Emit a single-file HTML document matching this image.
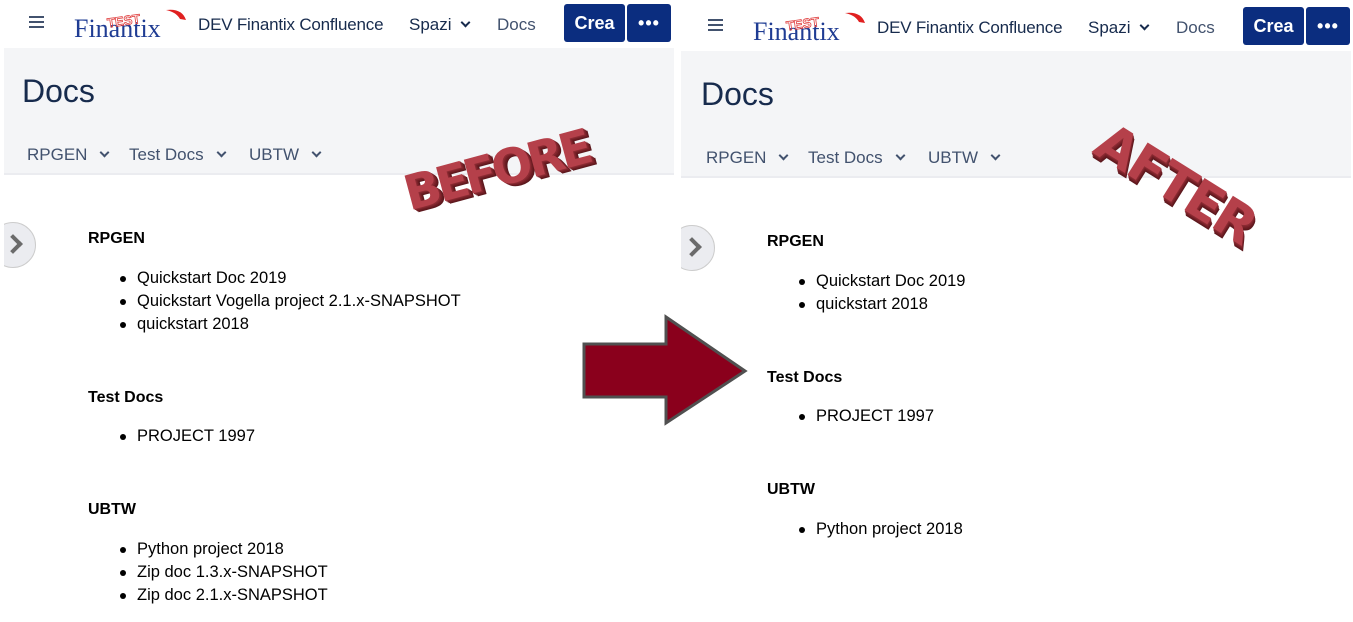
<!DOCTYPE html>
<html><head><meta charset="utf-8"><style>
*{margin:0;padding:0;box-sizing:border-box}
body{width:1353px;height:619px;background:#fff;position:relative;overflow:hidden;font-family:"Liberation Sans",sans-serif}
.p{position:absolute;top:0;width:676px;height:619px}
.a{position:absolute;white-space:nowrap}
.clip{position:absolute;left:4px;top:0;width:672px;height:619px;overflow:hidden}
.gray{position:absolute;left:4px;top:48px;width:670px;height:127px;background:#f4f5f7;border-bottom:2px solid #ebecf0}
.nav{font-size:17px;color:#172b4d;top:15px}
.sub{font-size:17px;color:#42526e;top:145px}
.h{font-size:16px;font-weight:bold;color:#000}
.li{font-size:16.5px;color:#000}
.li::before{content:"";position:absolute;left:-17px;top:7px;width:6px;height:6px;border-radius:50%;background:#000}
.chev{display:inline-block;width:7px;height:7px;border-right:2.5px solid #42526e;border-bottom:2.5px solid #42526e;transform:rotate(45deg);margin-left:14px;position:relative;top:-4px}
.btn{position:absolute;top:4px;height:38px;background:#0b2d7f;border-radius:3px;color:#fff;font-weight:bold;font-size:18px;text-align:center;line-height:38px}
.big{position:absolute;font-family:"DejaVu Sans",sans-serif;font-weight:bold;color:#b5404a;text-shadow:1px 1px 0 #8a2a32,2px 2px 0 #7a2229,3px 3px 0 #6a1c22,4px 4px 0 #5c181d}
</style></head><body>

<div class="p" style="left:0">
 <div class="a" style="left:29px;top:16px;width:15px;height:2px;background:#42526e;box-shadow:0 5px 0 #42526e,0 10px 0 #42526e"></div>
 <svg class="a" style="left:74px;top:6px" width="115" height="34">
  <path d="M92 4 Q108 2 112 14 L106 13 Q102 6 92 4Z" fill="#e02020"/>
  <text x="0" y="31" font-family="Liberation Serif" font-size="26" fill="#1f3c93">Finantix</text>
  <text x="33" y="20" font-family="Liberation Sans" font-weight="bold" font-size="13" fill="none" stroke="#e04040" stroke-width="0.8" transform="rotate(-8 45 15)">TEST</text>
 </svg>
 <div class="a nav" style="left:198px;letter-spacing:-0.2px">DEV Finantix Confluence</div>
 <div class="a nav" style="left:409px">Spazi<span class="chev" style="border-color:#172b4d;margin-left:10px"></span></div>
 <div class="a nav" style="left:497px;color:#42526e">Docs</div>
 <div class="btn" style="left:564px;width:61px">Crea</div>
 <div class="btn" style="left:627px;width:44px;letter-spacing:1px">•••</div>
 <div class="gray"></div>
 <div class="a" style="left:22px;top:73px;font-size:32px;color:#172b4d">Docs</div>
 <div class="a sub" style="left:27px">RPGEN<span class="chev"></span></div>
 <div class="a sub" style="left:129px">Test Docs<span class="chev"></span></div>
 <div class="a sub" style="left:249px">UBTW<span class="chev"></span></div>
 <div class="clip">
  <div class="a" style="left:-14px;top:222px;width:46px;height:46px;border-radius:50%;background:#ebecf0;border:1px solid #ccc"></div>
  <div class="a" style="left:2px;top:237px;width:14px;height:14px;border-right:4px solid #6b6b6b;border-top:4px solid #6b6b6b;transform:rotate(45deg)"></div>
 </div>
 <div class="a h" style="left:88px;top:230px">RPGEN</div>
 <div class="a li" style="left:137px;top:269px">Quickstart Doc 2019</div>
 <div class="a li" style="left:137px;top:292px">Quickstart Vogella project 2.1.x-SNAPSHOT</div>
 <div class="a li" style="left:137px;top:315px">quickstart 2018</div>
 <div class="a h" style="left:88px;top:389px">Test Docs</div>
 <div class="a li" style="left:137px;top:427px">PROJECT 1997</div>
 <div class="a h" style="left:88px;top:501px">UBTW</div>
 <div class="a li" style="left:137px;top:540px">Python project 2018</div>
 <div class="a li" style="left:137px;top:563px">Zip doc 1.3.x-SNAPSHOT</div>
 <div class="a li" style="left:137px;top:586px">Zip doc 2.1.x-SNAPSHOT</div>
</div>

<div class="p" style="left:679px;top:3px">
 <div class="a" style="left:29px;top:16px;width:15px;height:2px;background:#42526e;box-shadow:0 5px 0 #42526e,0 10px 0 #42526e"></div>
 <svg class="a" style="left:74px;top:6px" width="115" height="34">
  <path d="M92 4 Q108 2 112 14 L106 13 Q102 6 92 4Z" fill="#e02020"/>
  <text x="0" y="31" font-family="Liberation Serif" font-size="26" fill="#1f3c93">Finantix</text>
  <text x="33" y="20" font-family="Liberation Sans" font-weight="bold" font-size="13" fill="none" stroke="#e04040" stroke-width="0.8" transform="rotate(-8 45 15)">TEST</text>
 </svg>
 <div class="a nav" style="left:198px;letter-spacing:-0.2px">DEV Finantix Confluence</div>
 <div class="a nav" style="left:409px">Spazi<span class="chev" style="border-color:#172b4d;margin-left:10px"></span></div>
 <div class="a nav" style="left:497px;color:#42526e">Docs</div>
 <div class="btn" style="left:564px;width:61px">Crea</div>
 <div class="btn" style="left:627px;width:44px;letter-spacing:1px">•••</div>
 <div class="gray" style="left:2px"></div>
 <div class="a" style="left:22px;top:73px;font-size:32px;color:#172b4d">Docs</div>
 <div class="a sub" style="left:27px">RPGEN<span class="chev"></span></div>
 <div class="a sub" style="left:129px">Test Docs<span class="chev"></span></div>
 <div class="a sub" style="left:249px">UBTW<span class="chev"></span></div>
 <div class="clip" style="left:2px">
  <div class="a" style="left:-12px;top:222px;width:46px;height:46px;border-radius:50%;background:#ebecf0;border:1px solid #ccc"></div>
  <div class="a" style="left:4px;top:237px;width:14px;height:14px;border-right:4px solid #6b6b6b;border-top:4px solid #6b6b6b;transform:rotate(45deg)"></div>
 </div>
 <div class="a h" style="left:88px;top:230px">RPGEN</div>
 <div class="a li" style="left:137px;top:269px">Quickstart Doc 2019</div>
 <div class="a li" style="left:137px;top:292px">quickstart 2018</div>
 <div class="a h" style="left:88px;top:366px">Test Docs</div>
 <div class="a li" style="left:137px;top:404px">PROJECT 1997</div>
 <div class="a h" style="left:88px;top:478px">UBTW</div>
 <div class="a li" style="left:137px;top:517px">Python project 2018</div>
</div>

<svg class="a" style="left:0;top:0" width="1353" height="619">
 <polygon points="584,344 666,344 666,317 745,371 666,423 666,397 584,397" fill="#8a001c" stroke="#505050" stroke-width="3"/>
</svg>

<div class="big" style="left:398px;top:168px;font-size:48px;transform:rotate(-15deg);transform-origin:left top;letter-spacing:-4px">BEFORE</div>
<div class="big" style="left:1116px;top:112px;font-size:52px;transform:rotate(32deg);transform-origin:left top;letter-spacing:-2px">AFTER</div>

</body></html>
